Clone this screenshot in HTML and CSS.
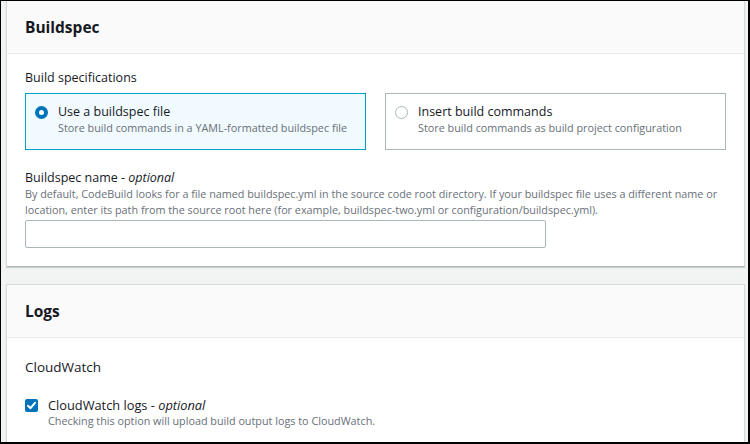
FILE: index.html
```html
<!DOCTYPE html>
<html lang="en">
<head>
  <meta charset="UTF-8" />
  <title>CodeBuild — Buildspec</title>
  <link rel="stylesheet" href="styles.css">
</head>
<body>
  <div class="frame">
    <div class="panel panel-first">
      <div class="panel-header">
        <h2>Buildspec</h2>
      </div>
      <div class="panel-body">
        <div class="field-label">Build specifications</div>
        <div class="tiles">
          <label class="tile selected">
            <span class="radio checked"></span>
            <span class="tile-text">
              <span class="tile-title">Use a buildspec file</span>
              <span class="tile-desc">Store build commands in a YAML-formatted buildspec file</span>
            </span>
          </label>
          <label class="tile">
            <span class="radio"></span>
            <span class="tile-text">
              <span class="tile-title">Insert build commands</span>
              <span class="tile-desc">Store build commands as build project configuration</span>
            </span>
          </label>
        </div>

        <div class="field">
          <div class="field-label">Buildspec name - <i>optional</i></div>
          <div class="field-desc">By default, CodeBuild looks for a file named buildspec.yml in the source code root directory. If your buildspec file uses a different name or location, enter its path from the source root here (for example, buildspec-two.yml or configuration/buildspec.yml).</div>
          <input type="text" class="text-input" />
        </div>
      </div>
    </div>

    <div class="panel">
      <div class="panel-header">
        <h2>Logs</h2>
      </div>
      <div class="panel-body logs-body">
        <div class="section-title">CloudWatch</div>
        <label class="check-row">
          <span class="checkbox">
            <svg width="13" height="13" viewBox="0 0 13 13">
              <path d="M3 6.8 L5.5 9.2 L10 3.8" fill="none" stroke="#fff" stroke-width="2" stroke-linecap="round" stroke-linejoin="round" />
            </svg>
          </span>
          <span class="check-text">
            <span class="check-title">CloudWatch logs - <i>optional</i></span>
            <span class="check-desc">Checking this option will upload build output logs to CloudWatch.</span>
          </span>
        </label>
      </div>
    </div>
  </div>
</body>
</html>
```

FILE: styles.css
```css
body {
  margin: 0;
  font-family: "Open Sans", Arial, sans-serif;
  color: #16191f;
}

.frame {
  box-sizing: border-box;
  width: 750px;
  height: 444px;
  overflow: hidden;
  background: #f2f3f3;
  border: 1px solid #000;
  border-right-width: 2px;
  border-bottom-width: 2px;
  padding: 0 3px 0 5px;
}

.panel {
  background: #fff;
  border: 1px solid #d5dbdb;
  border-bottom-color: #aab7b8;
  box-shadow: 0 1px 1px rgba(0, 28, 36, 0.15);
}

.panel-first {
  margin-top: -1px;
  margin-bottom: 17px;
}

.panel-header {
  background: #fafafa;
  border-bottom: 1px solid #eaeded;
  padding: 15px 18px;
}

.panel-header h2 {
  margin: 0;
  font-size: 15.5px;
  line-height: 22px;
  font-weight: 700;
}

.panel-body {
  padding: 16px 18px 18px;
}

.field-label {
  font-size: 12.5px;
  line-height: 16px;
}

.tiles {
  display: grid;
  grid-template-columns: 1fr 1fr;
  gap: 19px;
  margin-top: 7px;
}

.tile {
  display: flex;
  gap: 10px;
  height: 57px;
  box-sizing: border-box;
  padding: 9px 9px 0;
  border: 1px solid #aab7b8;
}

.tile.selected {
  border-color: #00a1c9;
  background: #f1faff;
}

.radio {
  flex: none;
  box-sizing: border-box;
  width: 13px;
  height: 13px;
  margin-top: 3px;
  border: 1px solid #aab7b8;
  border-radius: 50%;
  background: #fff;
}

.radio.checked {
  border: 4px solid #0073bb;
}

.tile-text {
  display: flex;
  flex-direction: column;
}

.tile-title {
  font-size: 12.5px;
  line-height: 18px;
}

.tile-desc,
.field-desc,
.check-desc {
  font-size: 10.8px;
  line-height: 16px;
  color: #687078;
}

.tile-desc {
  line-height: 14px;
}

.field {
  margin-top: 20px;
}

.text-input {
  display: block;
  box-sizing: border-box;
  width: 521px;
  height: 28px;
  margin-top: 2px;
  border: 1px solid #aab7b8;
  border-radius: 2px;
  background: #fff;
}

.logs-body {
  padding-top: 21px;
}

.section-title {
  font-size: 13.5px;
  line-height: 16px;
}

.check-row {
  display: flex;
  gap: 10px;
  margin-top: 22px;
}

.checkbox {
  flex: none;
  display: block;
  width: 13px;
  height: 13px;
  margin-top: 2px;
  border-radius: 2px;
  background: #0073bb;
}

.checkbox svg {
  display: block;
}

.check-text {
  display: flex;
  flex-direction: column;
}

.check-title {
  font-size: 12.8px;
  line-height: 16px;
}
```
